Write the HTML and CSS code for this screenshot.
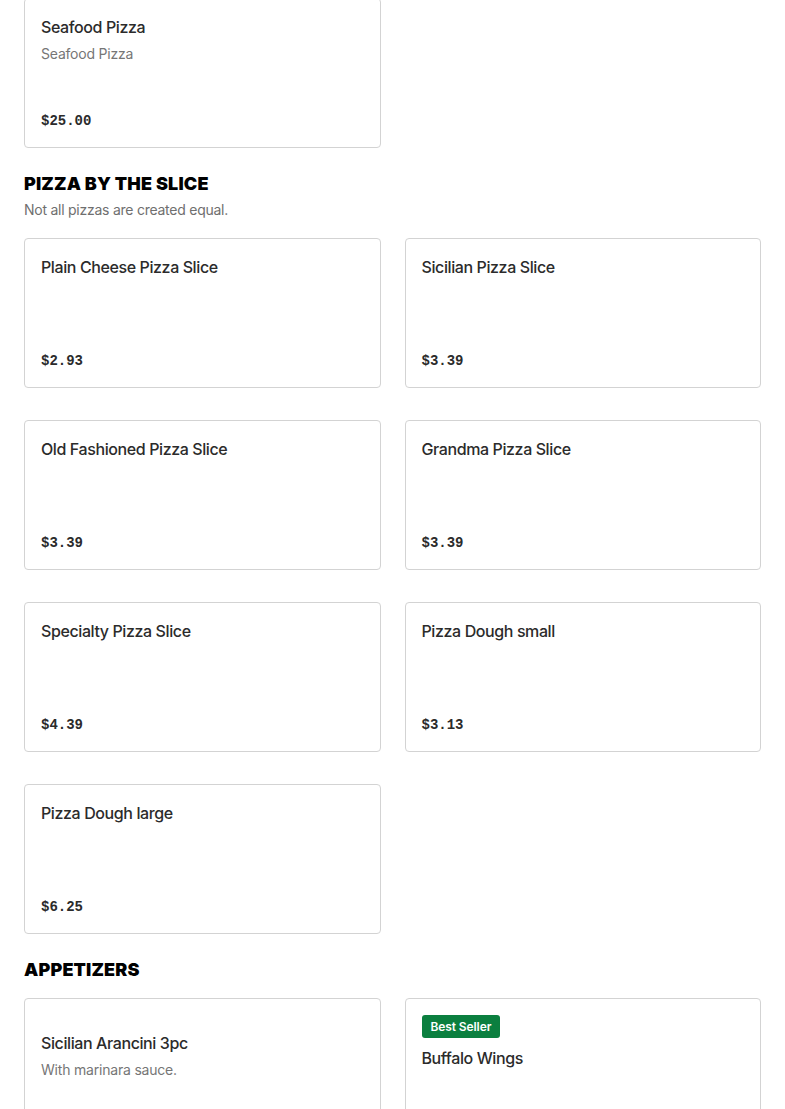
FILE: index.html
```html
<!DOCTYPE html>
<html lang="en">
<head>
<meta charset="utf-8">
<title>Menu</title>
<link rel="stylesheet" href="styles.css">
</head>
<body>
<main class="menu">
  <section class="section section--first">
    <div class="grid">
      <div class="card">
        <div class="card-title">Seafood Pizza</div>
        <div class="card-desc">Seafood Pizza</div>
        <div class="card-price">$25.00</div>
      </div>
    </div>
  </section>

  <section class="section">
    <header class="section-head">
      <h2 class="section-title">PIZZA BY THE SLICE</h2>
      <p class="section-sub">Not all pizzas are created equal.</p>
    </header>
    <div class="grid">
      <div class="card"><div class="card-title">Plain Cheese Pizza Slice</div><div class="card-price">$2.93</div></div>
      <div class="card"><div class="card-title">Sicilian Pizza Slice</div><div class="card-price">$3.39</div></div>
      <div class="card"><div class="card-title">Old Fashioned Pizza Slice</div><div class="card-price">$3.39</div></div>
      <div class="card"><div class="card-title">Grandma Pizza Slice</div><div class="card-price">$3.39</div></div>
      <div class="card"><div class="card-title">Specialty Pizza Slice</div><div class="card-price">$4.39</div></div>
      <div class="card"><div class="card-title">Pizza Dough small</div><div class="card-price">$3.13</div></div>
      <div class="card"><div class="card-title">Pizza Dough large</div><div class="card-price">$6.25</div></div>
    </div>
  </section>

  <section class="section">
    <header class="section-head section-head--plain">
      <h2 class="section-title">APPETIZERS</h2>
    </header>
    <div class="grid">
      <div class="card card--offset">
        <div class="card-title">Sicilian Arancini 3pc</div>
        <div class="card-desc">With marinara sauce.</div>
      </div>
      <div class="card">
        <span class="badge">Best Seller</span>
        <div class="card-title">Buffalo Wings</div>
      </div>
    </div>
  </section>
</main>
</body>
</html>
```

FILE: styles.css
```css
* { box-sizing: border-box; }
html, body { margin: 0; padding: 0; background: #fff; }
body {
  font-family: "Inter", "Liberation Sans", "Noto Sans", sans-serif;
  color: #2b2b2b;
}
.menu {
  padding: 0 24px;
  margin-top: -2px;
}
.section { margin-top: 24px; }
.section--first { margin-top: 0; }
.section-head { margin-bottom: 18px; }
.section-head--plain { margin-bottom: 16px; }
.section-title {
  margin: 0;
  font-size: 18px;
  line-height: 24px;
  font-weight: 900;
  color: #000;
  letter-spacing: 0.15px;
}
.section-sub {
  margin: 4px 0 0;
  font-size: 14px;
  line-height: 20px;
  color: #6f6f6f;
  letter-spacing: -0.25px;
}
.grid {
  display: grid;
  grid-template-columns: 1fr 1fr;
  column-gap: 24px;
  row-gap: 32px;
}
.card {
  height: 150px;
  border: 1px solid #d3d3d3;
  border-radius: 4px;
  padding: 16px;
  display: flex;
  flex-direction: column;
  align-items: flex-start;
}
.card--offset { padding-top: 32px; }
.card-title {
  font-size: 16px;
  line-height: 24px;
  font-weight: 500;
  color: #2b2b2b;
  letter-spacing: -0.4px;
}
.card-desc {
  margin-top: 5px;
  font-size: 14px;
  line-height: 20px;
  color: #767676;
  letter-spacing: -0.2px;
}
.card-price {
  margin-top: auto;
  font-family: "Liberation Mono", "DejaVu Sans Mono", monospace;
  font-size: 14px;
  line-height: 20px;
  font-weight: 700;
  color: #2b2b2b;
}
.badge {
  display: inline-block;
  background: #0b7f3f;
  color: #fff;
  font-size: 12px;
  line-height: 23px;
  height: 23px;
  padding: 0 9px;
  border-radius: 3px;
  font-weight: 600;
  letter-spacing: -0.1px;
  margin-bottom: 8px;
}
```
